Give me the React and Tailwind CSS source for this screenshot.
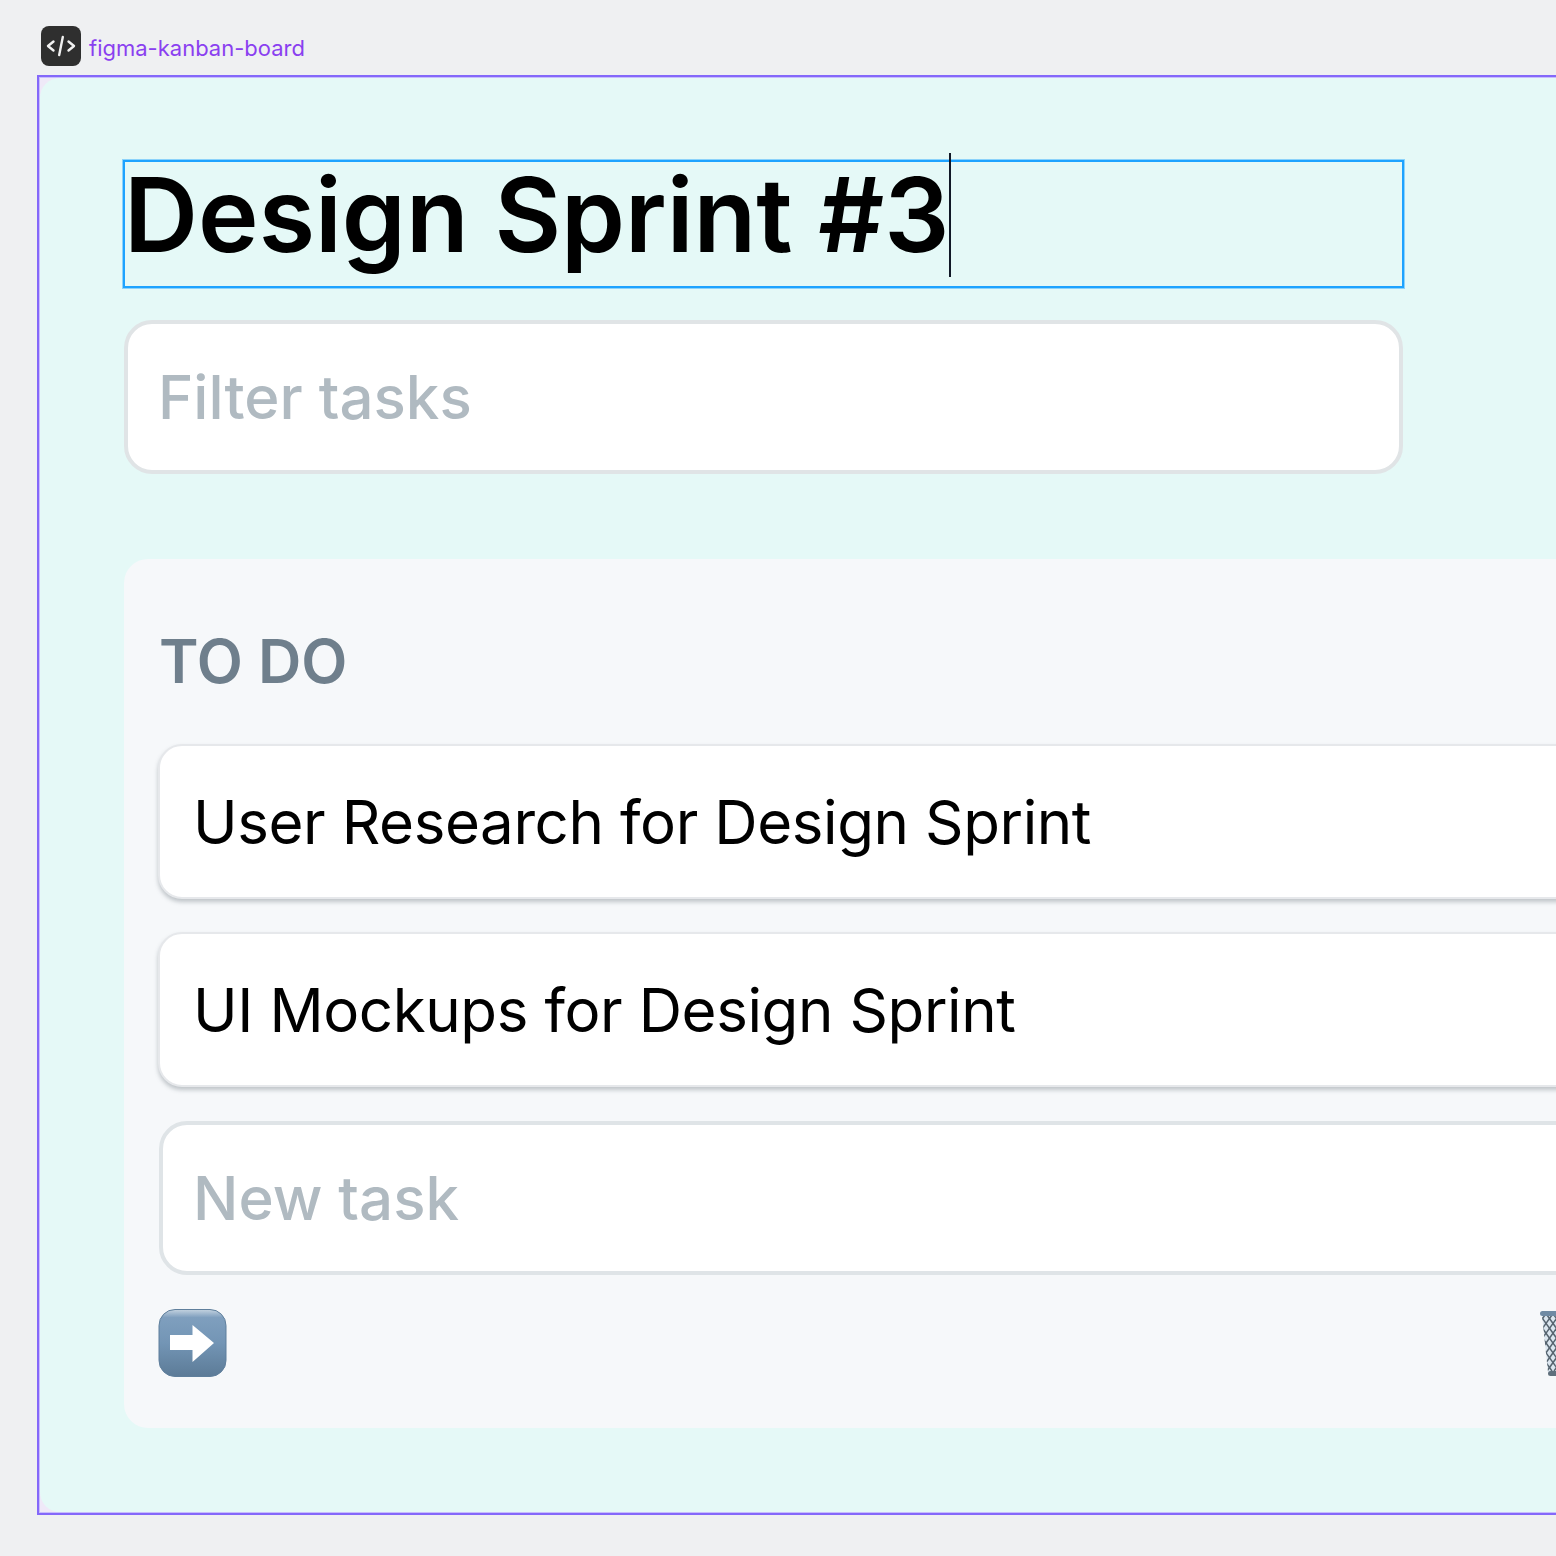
import React from "react";

const inter = "font-['Inter',sans-serif]";

function CodeIcon() {
  return (
    <div className="flex h-10 w-10 items-center justify-center rounded-lg bg-[#2f2f2f]">
      <svg width="30" height="24" viewBox="0 0 30 24" fill="none" stroke="#f2f2f2" strokeWidth="2.4" strokeLinecap="round" strokeLinejoin="round">
        <path d="M7.5 7.5 L2 12 L7.5 16.5" />
        <path d="M22.5 7.5 L28 12 L22.5 16.5" />
        <path d="M16.8 3 L13.2 21" />
      </svg>
    </div>
  );
}

function ArrowEmoji() {
  return (
    <svg width="69" height="69" viewBox="0 0 69 69" className="block">
      <defs>
        <linearGradient id="arrowBg" x1="0" y1="0" x2="0" y2="1">
          <stop offset="0" stopColor="#c4d3e0" />
          <stop offset="0.12" stopColor="#7f9fbe" />
          <stop offset="0.5" stopColor="#7395b5" />
          <stop offset="1" stopColor="#5c7b97" />
        </linearGradient>
      </defs>
      <rect x="1" y="0.5" width="67" height="67" rx="16" fill="url(#arrowBg)" stroke="#5f7f9c" />
      <path d="M12 26 H34.5 V16 L56 34 L34.5 53 V41 H12 Z" fill="#ffffff" />
    </svg>
  );
}

function TrashEmoji() {
  const lines = [];
  for (let i = -6; i < 9; i++) {
    lines.push(<path key={"a" + i} d={`M${i * 7} 6 L${i * 7 + 40} 62`} />);
    lines.push(<path key={"b" + i} d={`M${i * 7 + 40} 6 L${i * 7} 62`} />);
  }
  return (
    <svg width="40" height="68" viewBox="0 0 40 68" className="block">
      <defs>
        <clipPath id="basket">
          <path d="M2 6 H38 L33 63 H8 Z" />
        </clipPath>
      </defs>
      <rect x="2" y="6" width="36" height="57" fill="#dbe6ef" clipPath="url(#basket)" />
      <g clipPath="url(#basket)" stroke="#56646f" strokeWidth="1.5" fill="none">
        {lines}
      </g>
      <rect x="0" y="2" width="40" height="5" rx="2.5" fill="#6f8aa3" />
      <rect x="8" y="62" width="28" height="5" rx="2.5" fill="#5f6f7c" />
    </svg>
  );
}

function Card({ children }) {
  return (
    <div className="flex h-[155px] items-center rounded-[24px] border-2 border-[#e6e8eb] bg-white pl-[33px] text-[60px] leading-none tracking-[-0.4px] text-black shadow-[0_3px_4px_rgba(90,100,110,0.35)]">
      {children}
    </div>
  );
}

export default function App() {
  return (
    <div className={`h-[1556px] w-[1556px] overflow-hidden bg-[#eff0f2] ${inter}`}>
      <div className="flex h-[75px] items-start pl-[41px] pt-[26px]">
        <CodeIcon />
        <span className="ml-2 mt-[8px] text-[22px] leading-[28px] text-[#8a3ff0]">figma-kanban-board</span>
      </div>
      <div className="ml-[37px] h-[1440px] w-[1700px] border-2 border-[#8468fa] bg-[#efe9f8] p-px shadow-[inset_0_0_0_1px_#c8bdfc]">
        <div className="h-full rounded-l-[20px] bg-[#e5f9f7] pl-[83px] pt-[82px]">
          <div className="relative flex h-[128px] w-[1281px] items-center border-2 border-[#1ea3ff] pb-[18px] text-[102.5px] font-semibold leading-none text-black shadow-[0_0_0_1px_rgba(30,163,255,0.45)]">
            <span className="-ml-px">Design Sprint #3</span>
            <div className="absolute left-[824px] top-[-9px] h-[124px] w-[2px] bg-[#111827]" />
          </div>
          <div className="ml-px mt-[32px] flex h-[154px] w-[1279px] items-center rounded-[28px] border-4 border-[#e0e4e6] bg-white pl-[30px] text-[60px] font-medium leading-none text-[#b0bac1]">
            Filter tasks
          </div>
          <div className="ml-px mt-[85px] h-[869px] w-[1476px] rounded-[24px] bg-[#f6f8fa] pl-[34px] pr-[16px] pt-[70px]">
            <h2 className="ml-px h-[64px] text-[60px] font-semibold leading-[64px] text-[#6f7f8c]">TO DO</h2>
            <div className="mt-[51px] flex flex-col gap-[33px]">
              <Card>User Research for Design Sprint</Card>
              <Card>UI Mockups for Design Sprint</Card>
            </div>
            <div className="ml-px mt-[34px] flex h-[154px] items-center rounded-[28px] border-4 border-[#dfe4e7] bg-white pl-[30px] text-[60px] font-medium leading-none text-[#b0bac1]">
              New task
            </div>
            <div className="mt-[34px] flex items-start justify-between">
              <ArrowEmoji />
              <div className="mr-[4px]">
                <TrashEmoji />
              </div>
            </div>
          </div>
        </div>
      </div>
    </div>
  );
}
